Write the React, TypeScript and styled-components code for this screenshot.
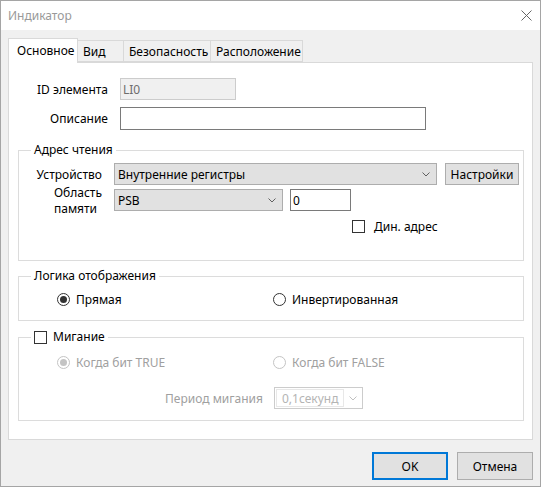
import * as React from "react";
import styled, { createGlobalStyle } from "styled-components";

const GlobalStyle = createGlobalStyle`
  body {
    margin: 0;
    background: #ffffff;
  }
  * {
    box-sizing: border-box;
  }
`;

const Window = styled.div`
  width: 541px;
  height: 487px;
  border: 1px solid #a5a5a5;
  display: flex;
  flex-direction: column;
  background: #f0f0f0;
  font-family: "Noto Sans", "Segoe UI", sans-serif;
  font-size: 12px;
  color: #000;
`;

const TitleBar = styled.div`
  height: 29px;
  flex: none;
  background: #fff;
  display: flex;
  align-items: center;
  justify-content: space-between;
  padding: 0 8px 0 7px;
  color: #999;
`;

const Body = styled.div`
  flex: 1;
  display: flex;
  flex-direction: column;
  padding: 8px 7px 6px 7px;
`;

const TabBar = styled.div`
  height: 24px;
  display: flex;
  align-items: flex-end;
  position: relative;
  z-index: 1;
`;

const Tab = styled.div<{ $w: number; $active?: boolean }>`
  width: ${(p) => p.$w}px;
  height: ${(p) => (p.$active ? 25 : 22)}px;
  margin-bottom: ${(p) => (p.$active ? -1 : 0)}px;
  margin-left: ${(p) => (p.$active ? 0 : -1)}px;
  padding-left: ${(p) => (p.$active ? 8 : 5)}px;
  padding-bottom: ${(p) => (p.$active ? 2 : 0)}px;
  border: 1px solid #d9d9d9;
  border-bottom: ${(p) => (p.$active ? "none" : "1px solid #d9d9d9")};
  background: ${(p) => (p.$active ? "#fff" : "#f0f0f0")};
  display: flex;
  align-items: center;
  white-space: nowrap;
  &:first-child {
    margin-left: 0;
  }
`;

const Panel = styled.div`
  height: 378px;
  border: 1px solid #d9d9d9;
  background: #fff;
  display: flex;
  flex-direction: column;
`;

const Row = styled.div<{ $top: number; $pad?: number; $h?: number }>`
  display: flex;
  align-items: center;
  margin-top: ${(p) => p.$top}px;
  padding-left: ${(p) => p.$pad ?? 0}px;
  height: ${(p) => (p.$h ? `${p.$h}px` : "auto")};
`;

const Label = styled.div<{ $w: number; $gap?: number; $muted?: boolean }>`
  width: ${(p) => p.$w}px;
  margin-right: ${(p) => p.$gap ?? 12}px;
  display: flex;
  justify-content: flex-end;
  color: ${(p) => (p.$muted ? "#a0a0a0" : "#000")};
  white-space: nowrap;
`;

const TwoLine = styled.div`
  display: flex;
  flex-direction: column;
  text-align: left;
  line-height: 16px;
  margin-top: 2px;
`;

const TextBox = styled.input<{ $w: number; $h?: number }>`
  width: ${(p) => p.$w}px;
  height: ${(p) => p.$h ?? 22}px;
  border: 1px solid #7a7a7a;
  background: #fff;
  padding: 0 2px;
  margin: 0;
  font: inherit;
  color: #000;
  outline: none;
  &:disabled {
    border-color: #cccccc;
    background: #f0f0f0;
    color: #6d6d6d;
  }
`;

const Combo = styled.div<{ $w: number; $gap?: number }>`
  width: ${(p) => p.$w}px;
  height: 22px;
  border: 1px solid #adadad;
  background: #e1e1e1;
  display: flex;
  align-items: center;
  justify-content: space-between;
  padding: 0 6px 0 3px;
  margin-right: ${(p) => p.$gap ?? 7}px;
`;

const DisabledCombo = styled.div`
  width: 89px;
  height: 22px;
  border: 1px solid #cccccc;
  background: #fff;
  display: flex;
  align-items: stretch;
  padding: 1px;
`;

const ComboText = styled.div`
  width: 68px;
  border: 1px solid #e8e8e8;
  color: #b4b4b4;
  display: flex;
  align-items: center;
  padding-left: 5px;
`;

const ComboArrow = styled.div`
  flex: 1;
  display: flex;
  align-items: center;
  justify-content: center;
`;

const Button = styled.button<{ $w: number; $h: number; $primary?: boolean }>`
  width: ${(p) => p.$w}px;
  height: ${(p) => p.$h}px;
  border: ${(p) => (p.$primary ? "2px solid #0078d7" : "1px solid #adadad")};
  background: #e1e1e1;
  font: inherit;
  color: #000;
  padding: 0;
  margin: 0;
`;

const Group = styled.fieldset<{ $top: number; $bottom: number }>`
  margin: ${(p) => p.$top}px 8px 0 9px;
  padding: 0 0 ${(p) => p.$bottom}px 0;
  border: 1px solid #dcdcdc;
  min-width: 0;
`;

const Legend = styled.legend`
  margin-left: 12px;
  padding: 0 3px;
  line-height: 16px;
  height: 16px;
  display: flex;
  align-items: center;
`;

const Option = styled.label<{ $gap: number; $muted?: boolean }>`
  display: flex;
  align-items: center;
  gap: ${(p) => p.$gap}px;
  height: 16px;
  color: ${(p) => (p.$muted ? "#a0a0a0" : "#000")};
  white-space: nowrap;
`;

const RadioRow = styled.div<{ $top: number }>`
  display: grid;
  grid-template-columns: 216px auto;
  padding-left: 38px;
  margin-top: ${(p) => p.$top}px;
`;

const RadioDot = styled.span<{ $checked?: boolean; $muted?: boolean }>`
  width: 13px;
  height: 13px;
  border-radius: 50%;
  border: 1px solid ${(p) => (p.$muted ? "#c4c4c4" : "#333")};
  background: #fff;
  display: flex;
  align-items: center;
  justify-content: center;
  flex: none;
  &::after {
    content: "";
    width: 7px;
    height: 7px;
    border-radius: 50%;
    background: ${(p) => (p.$muted ? "#c4c4c4" : "#333")};
    display: ${(p) => (p.$checked ? "block" : "none")};
  }
`;

const CheckBox = styled.span`
  width: 13px;
  height: 13px;
  border: 1px solid #333;
  background: #fff;
  flex: none;
`;

const Footer = styled.div`
  margin-top: 12px;
  display: flex;
  justify-content: flex-end;
  gap: 9px;
`;

const Chevron = ({ color = "#606060" }: { color?: string }) => (
  <svg width="8" height="5" viewBox="0 0 8 5">
    <path d="M0.5 0.5 L4 4 L7.5 0.5" fill="none" stroke={color} strokeWidth="1" />
  </svg>
);

const CloseIcon = () => (
  <svg width="11" height="11" viewBox="0 0 11 11">
    <path d="M0.5 0.5 L10.5 10.5 M10.5 0.5 L0.5 10.5" stroke="#666" strokeWidth="1" />
  </svg>
);

const tabs = [
  { name: "Основное", w: 70 },
  { name: "Вид", w: 47 },
  { name: "Безопасность", w: 88 },
  { name: "Расположение", w: 93 },
];

export default function App() {
  return (
    <>
      <GlobalStyle />
      <Window>
        <TitleBar>
          <span>Индикатор</span>
          <CloseIcon />
        </TitleBar>
        <Body>
          <TabBar>
            {tabs.map((t, i) => (
              <Tab key={t.name} $w={t.w} $active={i === 0}>
                {t.name}
              </Tab>
            ))}
          </TabBar>
          <Panel>
            <Row $top={15}>
              <Label $w={99}>ID элемента</Label>
              <TextBox $w={116} disabled defaultValue="LI0" />
            </Row>
            <Row $top={7}>
              <Label $w={99}>Описание</Label>
              <TextBox $w={306} $h={23} defaultValue="" />
            </Row>

            <Group $top={12} $bottom={26}>
              <Legend>Адрес чтения</Legend>
              <Row $top={5} $h={22}>
                <Label $w={83}>Устройство</Label>
                <Combo $w={323} $gap={8}>
                  <span>Внутренние регистры</span>
                  <Chevron />
                </Combo>
                <Button $w={74} $h={22}>Настройки</Button>
              </Row>
              <Row $top={4} $h={22}>
                <Label $w={83}>
                  <TwoLine>
                    <span>Область</span>
                    <span>памяти</span>
                  </TwoLine>
                </Label>
                <Combo $w={169}>
                  <span>PSB</span>
                  <Chevron />
                </Combo>
                <TextBox $w={61} defaultValue="0" />
              </Row>
              <Row $top={7} $pad={333} $h={16}>
                <Option $gap={9}>
                  <CheckBox />
                  Дин. адрес
                </Option>
              </Row>
            </Group>

            <Group $top={7} $bottom={13}>
              <Legend>Логика отображения</Legend>
              <RadioRow $top={7}>
                <Option $gap={6}>
                  <RadioDot $checked />
                  Прямая
                </Option>
                <Option $gap={6}>
                  <RadioDot />
                  Инвертированная
                </Option>
              </RadioRow>
            </Group>

            <Group $top={8} $bottom={11}>
              <Legend>
                <Option $gap={6}>
                  <CheckBox />
                  Мигание
                </Option>
              </Legend>
              <RadioRow $top={9}>
                <Option $gap={6} $muted>
                  <RadioDot $checked $muted />
                  Когда бит TRUE
                </Option>
                <Option $gap={6} $muted>
                  <RadioDot $muted />
                  Когда бит FALSE
                </Option>
              </RadioRow>
              <Row $top={17}>
                <Label $w={244} $gap={11} $muted>
                  Период мигания
                </Label>
                <DisabledCombo>
                  <ComboText>0,1секунд</ComboText>
                  <ComboArrow>
                    <Chevron color="#c0c0c0" />
                  </ComboArrow>
                </DisabledCombo>
              </Row>
            </Group>
          </Panel>
          <Footer>
            <Button $w={76} $h={28} $primary>
              OK
            </Button>
            <Button $w={76} $h={28}>
              Отмена
            </Button>
          </Footer>
        </Body>
      </Window>
    </>
  );
}
